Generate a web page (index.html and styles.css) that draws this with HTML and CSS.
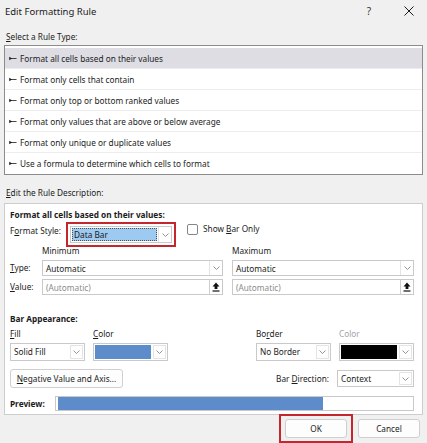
FILE: index.html
```html
<!DOCTYPE html>
<html lang="en">
<head>
    <meta charset="UTF-8">
    <meta name="viewport" content="width=device-width, initial-scale=1.0">
    <title>Edit Formatting Rule</title>
    <link rel="stylesheet" href="styles.css">
</head>
<body>
    <svg class="defs" width="0" height="0">
        <symbol id="bullet" viewBox="0 0 9 5">
            <path d="M0.3 0.6 L3.4 2.5 L0.3 4.4 Z" fill="#1b1b1b"/>
            <path d="M1 2.5 H8.5" stroke="#1b1b1b" stroke-width="0.9"/>
        </symbol>
        <symbol id="chevron" viewBox="0 0 7 4">
            <polyline points="0.5,0.5 3.5,3.5 6.5,0.5" fill="none" stroke="#7a7a7a" stroke-width="0.8"/>
        </symbol>
        <symbol id="pick" viewBox="0 0 8 10">
            <path d="M4 0.5 L7.5 4.5 H5.4 V7 H2.6 V4.5 H0.5 Z" fill="#111"/>
            <path d="M0.5 9 H7.5" stroke="#111" stroke-width="1.2"/>
        </symbol>
    </svg>

    <div class="dialog">
        <div class="titlebar">
            <span class="title">Edit Formatting Rule</span>
            <span class="help">?</span>
            <span class="close">
                <svg width="10" height="10" viewBox="0 0 10 10"><path d="M0.5 0.5 L9.5 9.5 M9.5 0.5 L0.5 9.5" stroke="#1b1b1b" stroke-width="1"/></svg>
            </span>
        </div>

        <div class="caption"><u>S</u>elect a Rule Type:</div>
        <ul class="rule-list">
            <li class="selected"><svg class="bullet"><use href="#bullet"/></svg>Format all cells based on their values</li>
            <li><svg class="bullet"><use href="#bullet"/></svg>Format only cells that contain</li>
            <li><svg class="bullet"><use href="#bullet"/></svg>Format only top or bottom ranked values</li>
            <li><svg class="bullet"><use href="#bullet"/></svg>Format only values that are above or below average</li>
            <li><svg class="bullet"><use href="#bullet"/></svg>Format only unique or duplicate values</li>
            <li><svg class="bullet"><use href="#bullet"/></svg>Use a formula to determine which cells to format</li>
        </ul>

        <div class="caption caption-desc"><u>E</u>dit the Rule Description:</div>
        <div class="desc">
            <div class="heading">Format all cells based on their values:</div>

            <div class="style-row">
                <span class="style-label">F<u>o</u>rmat Style:</span>
                <div class="focus-frame">
                    <div class="combo combo-style">
                        <span class="combo-selected">Data Bar</span>
                        <span class="combo-btn"><svg class="chev"><use href="#chevron"/></svg></span>
                    </div>
                </div>
                <span class="checkbox"></span>
                <span class="check-label">Show <u>B</u>ar Only</span>
            </div>

            <div class="minmax">
                <span></span>
                <span class="col-title">Minimum</span>
                <span class="col-title">Maximum</span>

                <span class="row-label"><u>T</u>ype:</span>
                <div class="combo">
                    <span class="combo-text">Automatic</span>
                    <span class="combo-btn"><svg class="chev"><use href="#chevron"/></svg></span>
                </div>
                <div class="combo">
                    <span class="combo-text">Automatic</span>
                    <span class="combo-btn"><svg class="chev"><use href="#chevron"/></svg></span>
                </div>

                <span class="row-label"><u>V</u>alue:</span>
                <div class="combo">
                    <span class="combo-text placeholder">(Automatic)</span>
                    <span class="pick-btn"><svg class="pick"><use href="#pick"/></svg></span>
                </div>
                <div class="combo">
                    <span class="combo-text placeholder">(Automatic)</span>
                    <span class="pick-btn"><svg class="pick"><use href="#pick"/></svg></span>
                </div>
            </div>

            <div class="bar-title">Bar Appearance:</div>
            <div class="appearance">
                <span><u>F</u>ill</span>
                <span><u>C</u>olor</span>
                <span></span>
                <span>Bo<u>r</u>der</span>
                <span class="disabled">Color</span>

                <div class="combo combo-tall">
                    <span class="combo-text">Solid Fill</span>
                    <span class="combo-btn boxed"><svg class="chev"><use href="#chevron"/></svg></span>
                </div>
                <div class="combo combo-tall">
                    <span class="swatch swatch-blue"></span>
                    <span class="combo-btn boxed"><svg class="chev"><use href="#chevron"/></svg></span>
                </div>
                <span></span>
                <div class="combo combo-tall">
                    <span class="combo-text">No Border</span>
                    <span class="combo-btn boxed"><svg class="chev"><use href="#chevron"/></svg></span>
                </div>
                <div class="combo combo-tall">
                    <span class="swatch swatch-black"></span>
                    <span class="combo-btn boxed"><svg class="chev"><use href="#chevron"/></svg></span>
                </div>
            </div>

            <div class="direction-row">
                <button class="btn btn-wide"><u>N</u>egative Value and Axis...</button>
                <span class="spacer"></span>
                <span class="direction-label">Bar <u>D</u>irection:</span>
                <div class="combo combo-context">
                    <span class="combo-text">Context</span>
                    <span class="combo-btn boxed"><svg class="chev"><use href="#chevron"/></svg></span>
                </div>
            </div>

            <div class="preview-row">
                <span class="preview-label">Preview:</span>
                <div class="preview-box">
                    <div class="preview-bar" style="width: 75%;"></div>
                </div>
            </div>
        </div>

        <div class="buttons">
            <div class="ok-frame">
                <button class="btn">OK</button>
            </div>
            <button class="btn btn-cancel">Cancel</button>
        </div>
    </div>
</body>
</html>
```

FILE: styles.css
```css
* {
    box-sizing: border-box;
}
body {
    margin: 0;
    background: #f0f0f0;
    font-family: "Noto Sans", "DejaVu Sans", sans-serif;
    font-size: 8.25px;
    color: #1b1b1b;
}
.defs {
    position: absolute;
}
.dialog {
    width: 427px;
    height: 443px;
    overflow: hidden;
}

/* title bar */
.titlebar {
    display: flex;
    align-items: center;
    height: 22px;
    padding-left: 5px;
}
.title {
    flex: 1;
    font-size: 9.5px;
}
.help {
    width: 44px;
    text-align: center;
    font-size: 10px;
    color: #333;
}
.close {
    width: 36px;
    display: flex;
    justify-content: center;
}

.caption {
    margin: 8px 0 0 6px;
    line-height: 14px;
}
.caption-desc {
    margin-top: 11px;
}

/* rule type list */
.rule-list {
    list-style: none;
    margin: 1px 4px 0 4px;
    padding: 2px 0 0 0;
    background: #fff;
    border: 1px solid #8c8c8c;
}
.rule-list li {
    display: flex;
    align-items: center;
    height: 21px;
    padding-left: 4px;
    border-bottom: 1px solid #ededed;
}
.rule-list li:last-child {
    border-bottom: none;
}
.rule-list li.selected {
    background: #dedde4;
}
.bullet {
    width: 8px;
    height: 5px;
    margin-right: 3px;
}

/* rule description */
.desc {
    margin: 3px 4px 0 4px;
    background: #fff;
    border: 1px solid #cdcdcd;
    padding: 4px 8px 3px 5px;
}
.heading {
    font-weight: bold;
    line-height: 14px;
}
.style-row {
    display: flex;
    align-items: flex-start;
    height: 25px;
}
.style-label {
    width: 56px;
    padding-top: 2px;
    line-height: 14px;
}
.focus-frame {
    width: 110px;
    height: 25px;
    border: 2px solid #c4262e;
    padding: 2px;
}
.checkbox {
    width: 11px;
    height: 11px;
    margin: 2px 0 0 11px;
    border: 1px solid #858585;
    border-radius: 2px;
    background: #fff;
}
.check-label {
    margin-left: 5px;
    line-height: 14px;
}

.combo {
    display: flex;
    align-items: stretch;
    height: 16px;
    background: #fff;
    border: 1px solid #c9c9c9;
}
.combo-tall {
    height: 18px;
}
.combo-style {
    height: 17px;
}
.combo-context {
    width: 77px;
    height: 17px;
}
.combo-text {
    flex: 1;
    padding-left: 3px;
    display: flex;
    align-items: center;
    white-space: nowrap;
}
.combo-selected {
    flex: 1;
    margin: 1px;
    padding-left: 2px;
    display: flex;
    align-items: center;
    background: #9dcaf0;
    outline: 1px dotted #555;
    outline-offset: -1px;
}
.combo-btn {
    width: 13px;
    display: flex;
    align-items: center;
    justify-content: center;
    border-left: 1px solid #e4e4e4;
}
.combo-btn.boxed {
    margin: 1px 1px 1px 0;
    border: 1px solid #e4e4e4;
}
.chev {
    width: 7px;
    height: 4px;
}
.pick-btn {
    width: 13px;
    display: flex;
    align-items: center;
    justify-content: center;
    border-left: 1px solid #cfcfcf;
}
.pick {
    width: 8px;
    height: 10px;
}
.placeholder {
    color: #8b8b8b;
}

.minmax {
    display: grid;
    grid-template-columns: 23px 181px 182px;
    grid-template-rows: 12px 16px 16px;
    column-gap: 9px;
    row-gap: 3px;
    margin-top: -2px;
}
.col-title,
.row-label {
    line-height: 12px;
    white-space: nowrap;
}
.row-label {
    line-height: 16px;
}

.bar-title {
    margin-top: 18px;
    font-weight: bold;
    line-height: 12px;
}
.appearance {
    display: grid;
    grid-template-columns: 75px 75px 1fr 75px 75px;
    grid-template-rows: 12px 18px;
    column-gap: 8px;
    row-gap: 3px;
    margin-top: 3px;
    line-height: 12px;
}
.disabled {
    color: #a3a3a3;
}
.swatch {
    flex: 1;
    margin: 1px 2px 1px 1px;
}
.swatch-blue {
    background: #5e8ccb;
}
.swatch-black {
    background: #000;
}

.btn {
    width: 62px;
    height: 19px;
    padding: 0;
    font: inherit;
    color: inherit;
    background: #fdfdfd;
    border: 1px solid #cfcfcf;
    border-radius: 3px;
}
.btn-wide {
    width: 113px;
}
.direction-row {
    display: flex;
    align-items: center;
    margin-top: 8px;
    height: 19px;
}
.spacer {
    flex: 1;
}
.direction-label {
    margin-right: 8px;
}

.preview-row {
    display: flex;
    align-items: center;
    margin-top: 8px;
    height: 15px;
}
.preview-label {
    width: 45px;
    font-weight: bold;
}
.preview-box {
    flex: 1;
    height: 15px;
    padding: 0 2px;
    background: #fff;
    border: 1px solid #c9c9c9;
}
.preview-bar {
    height: 13px;
    background: #5e8ccb;
}

/* dialog buttons */
.buttons {
    display: flex;
    justify-content: flex-end;
    align-items: flex-start;
    margin-top: -1px;
    padding-right: 7px;
}
.ok-frame {
    border: 2px solid #c4262e;
    padding: 3px 4px;
}
.btn-cancel {
    margin: 5px 0 0 5px;
}
```
